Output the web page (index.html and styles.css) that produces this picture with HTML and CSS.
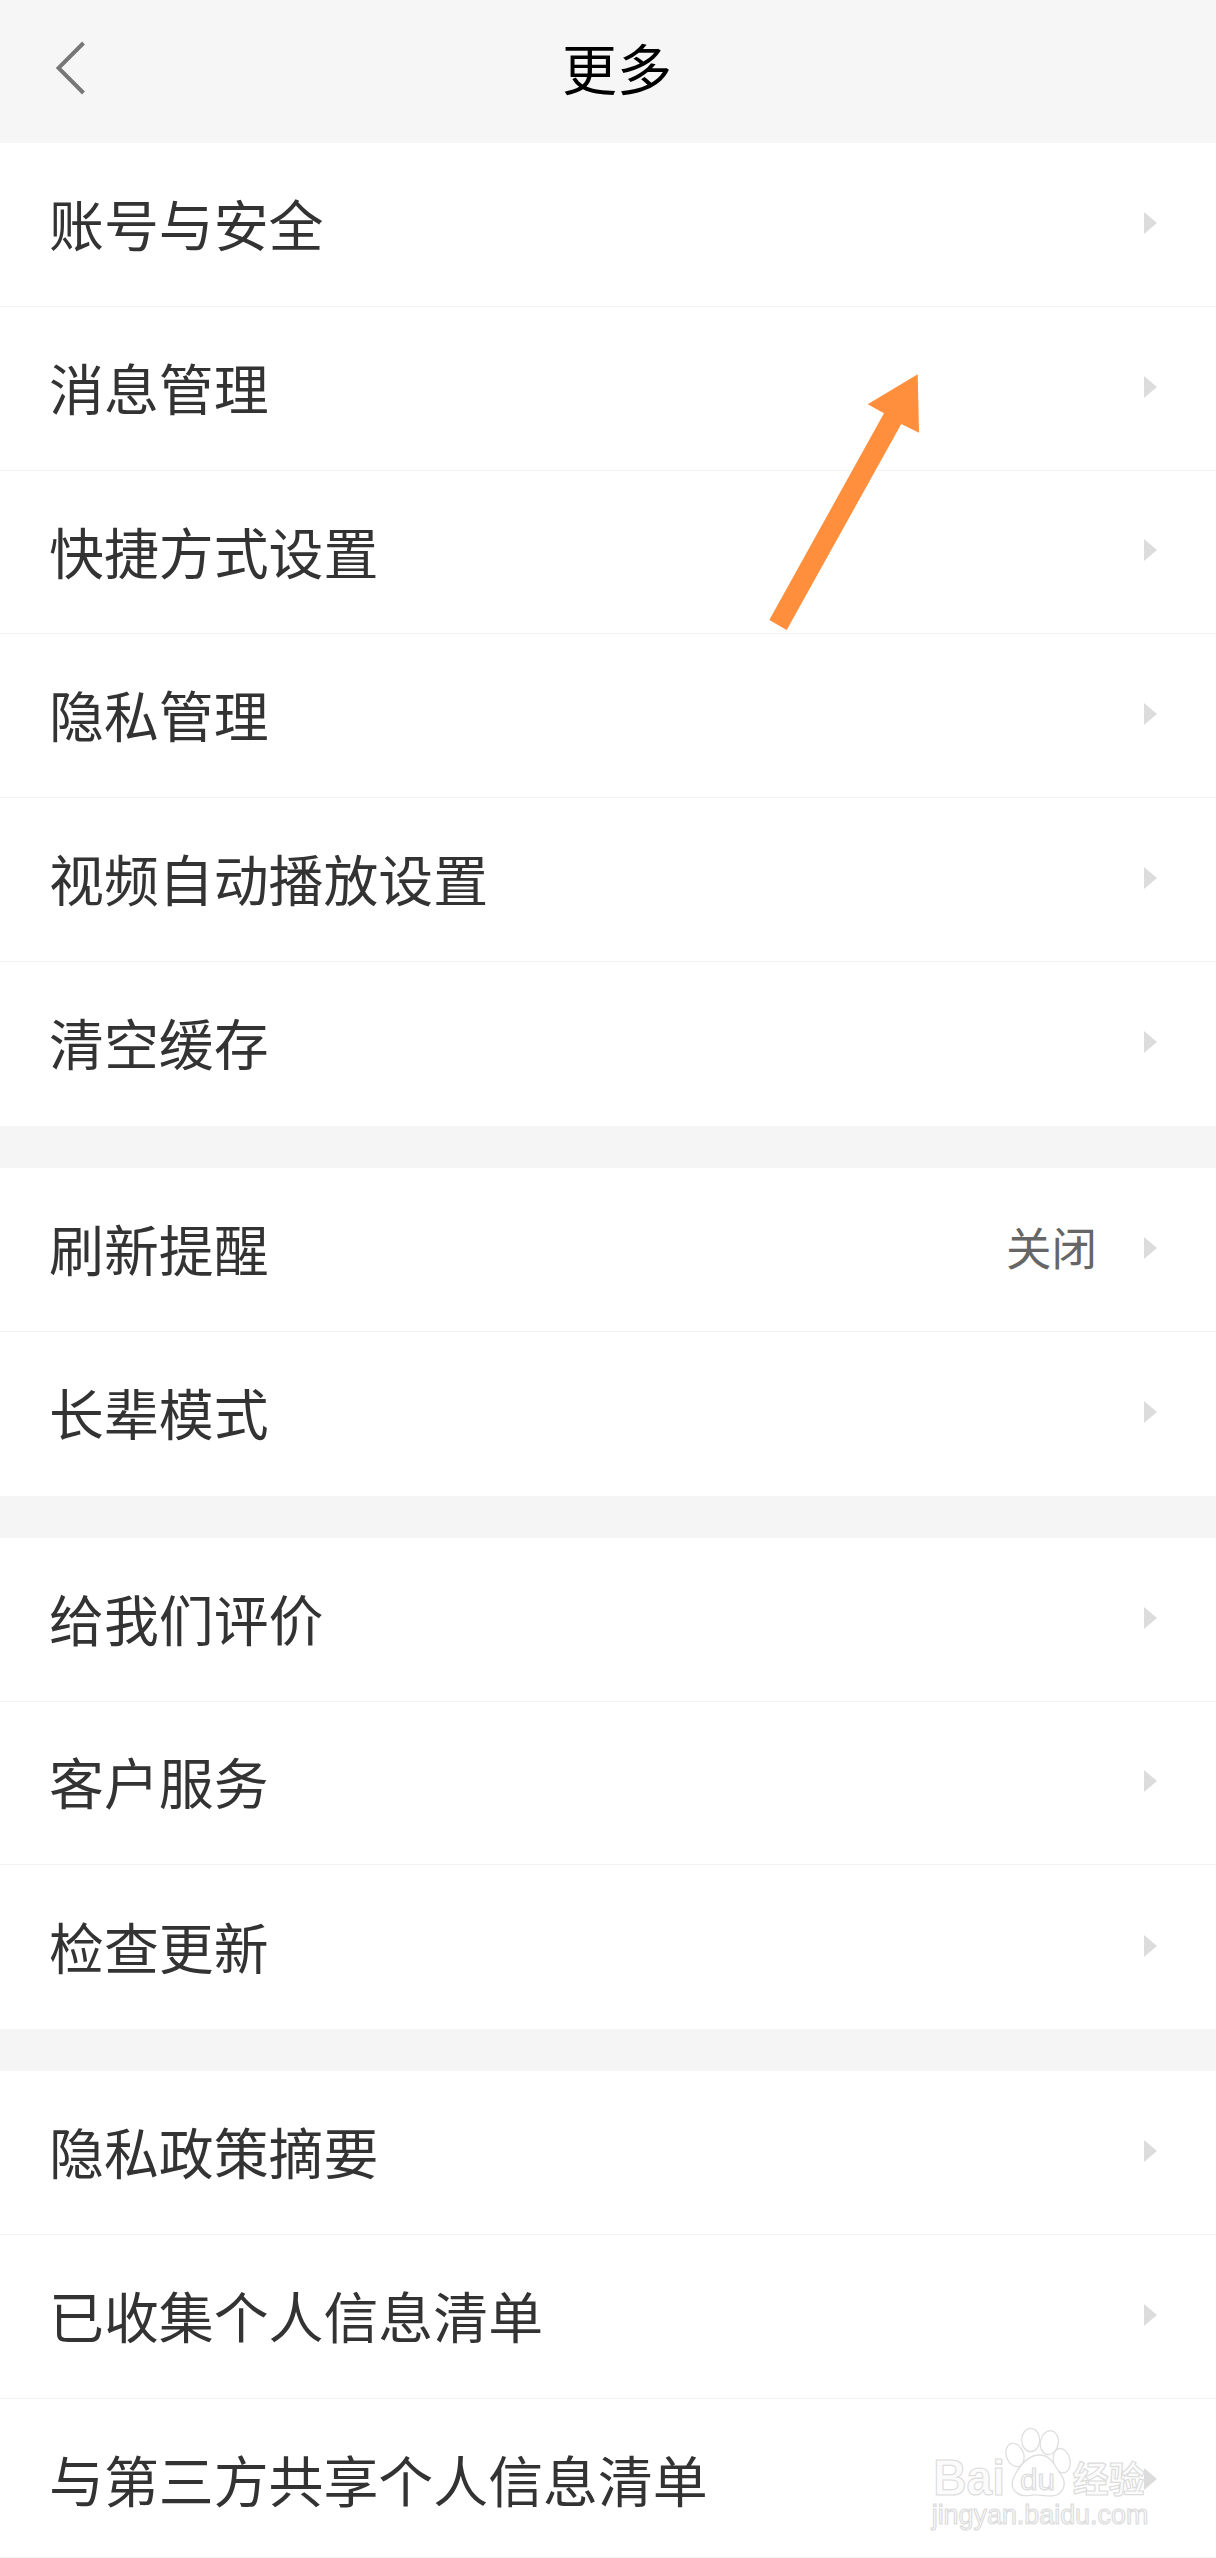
FILE: index.html
```html
<!DOCTYPE html>
<html lang="zh-CN">
<head>
<meta charset="utf-8">
<title>更多</title>
<link rel="stylesheet" href="styles.css">
</head>
<body>
<div class="page">
  <header class="topbar">
    <svg class="back" viewBox="0 0 30 54" width="30" height="54"><path d="M27.5 2 L2.5 27 L27.5 52" fill="none" stroke="#777" stroke-width="4"/></svg>
    <h1 class="title">更多</h1>
  </header>
  <section class="group">
    <div class="row"><span class="label">账号与安全</span><i class="chev"></i></div>
    <div class="row"><span class="label">消息管理</span><i class="chev"></i></div>
    <div class="row"><span class="label">快捷方式设置</span><i class="chev"></i></div>
    <div class="row"><span class="label">隐私管理</span><i class="chev"></i></div>
    <div class="row"><span class="label">视频自动播放设置</span><i class="chev"></i></div>
    <div class="row"><span class="label">清空缓存</span><i class="chev"></i></div>
  </section>
  <section class="group">
    <div class="row"><span class="label">刷新提醒</span><span class="value">关闭</span><i class="chev"></i></div>
    <div class="row"><span class="label">长辈模式</span><i class="chev"></i></div>
  </section>
  <section class="group">
    <div class="row"><span class="label">给我们评价</span><i class="chev"></i></div>
    <div class="row"><span class="label">客户服务</span><i class="chev"></i></div>
    <div class="row"><span class="label">检查更新</span><i class="chev"></i></div>
  </section>
  <section class="group">
    <div class="row"><span class="label">隐私政策摘要</span><i class="chev"></i></div>
    <div class="row"><span class="label">已收集个人信息清单</span><i class="chev"></i></div>
    <div class="row"><span class="label">与第三方共享个人信息清单</span><i class="chev"></i></div>
  </section>
  <svg class="arrow" viewBox="0 0 1216 2558" width="1216" height="2558"><polygon points="917.7,374.3 919,432.7 901.3,424 786.7,630 769.3,620 884,413.3 867.7,404.3" fill="#ff8f3c"/></svg>
  <svg class="mark" viewBox="135 195 720 330" width="240" height="110">
    <g class="mark-shape">
      <ellipse cx="405" cy="285" rx="26" ry="36" transform="rotate(-20 405 285)"/>
      <ellipse cx="452" cy="240" rx="27" ry="35"/>
      <ellipse cx="508" cy="248" rx="27" ry="36" transform="rotate(10 508 248)"/>
      <ellipse cx="545" cy="302" rx="25" ry="37" transform="rotate(-12 545 302)"/>
      <path d="M478 285 C515 285 525 320 540 340 C565 370 550 408 510 408 C490 408 470 402 450 406 C410 412 385 385 402 350 C415 325 440 285 478 285 Z"/>
    </g>
    <text class="mark-bai" x="160" y="404" textLength="215" lengthAdjust="spacingAndGlyphs">Bai</text>
    <text class="mark-du" x="420" y="390" textLength="105" lengthAdjust="spacingAndGlyphs">du</text>
    <text class="mark-cn" x="578" y="398">经验</text>
    <text class="mark-url" x="155" y="492" textLength="650" lengthAdjust="spacingAndGlyphs">jingyan.baidu.com</text>
  </svg>
  <div class="endline"></div>
</div>
</body>
</html>
```
FILE: styles.css
```css
html, body {
  margin: 0;
  padding: 0;
  background: #f5f5f5;
  overflow: hidden;
}
body {
  font-family: "Noto Sans CJK SC", "Noto Sans", sans-serif;
}
.page {
  position: relative;
  width: 1216px;
  height: 2558px;
  overflow: hidden;
  display: flex;
  flex-direction: column;
  gap: 42.2px;
}
.topbar {
  flex: none;
  height: 143px;
  margin-bottom: -42.2px;
  padding-left: 56px;
  display: flex;
  align-items: center;
  gap: 476px;
  box-sizing: border-box;
  background: #f6f6f6;
}
.back {
  flex: none;
  margin-top: -8px;
}
.title {
  margin: 0 0 10px;
  font-size: 55px;
  font-weight: 400;
  line-height: 1;
  color: #000;
}
.group {
  flex: none;
  background: #fff;
}
.row {
  height: 163.8px;
  box-sizing: border-box;
  padding: 0 59px 0 49px;
  display: flex;
  align-items: center;
  border-bottom: 1px solid #f3f3f3;
  background: #fff;
}
.row:last-child {
  border-bottom: none;
}
.label {
  flex: 1;
  padding-bottom: 4px;
  font-size: 54.9px;
  line-height: 1;
  color: #333;
}
.value {
  margin-right: 47px;
  padding-bottom: 5px;
  font-size: 45.5px;
  line-height: 1;
  color: #666;
}
.chev {
  flex: none;
  width: 0;
  height: 0;
  margin-top: -3px;
  border-left: 13px solid #dcdcdc;
  border-top: 11px solid transparent;
  border-bottom: 11px solid transparent;
}
.arrow {
  position: absolute;
  left: 0;
  top: 0;
}
.mark {
  position: absolute;
  left: 925px;
  top: 2425px;
}
.mark-shape {
  fill: #fff;
  stroke: #dfdfdf;
  stroke-width: 4;
}
.mark-bai, .mark-du, .mark-cn, .mark-url {
  fill: #fbfbfb;
  stroke: #dcdcdc;
  stroke-width: 3.5;
}
.mark-bai {
  font-family: "Liberation Sans", sans-serif;
  font-size: 150px;
  font-weight: 700;
}
.mark-du {
  font-family: "Liberation Sans", sans-serif;
  font-size: 88px;
}
.mark-cn {
  font-family: "Noto Sans CJK SC", sans-serif;
  font-size: 108px;
  font-weight: 700;
}
.mark-url {
  font-family: "Liberation Sans", sans-serif;
  font-size: 82px;
}
.endline {
  position: absolute;
  left: 0;
  right: 0;
  top: 2557px;
  height: 1px;
  background: #f0f0f0;
}
```
